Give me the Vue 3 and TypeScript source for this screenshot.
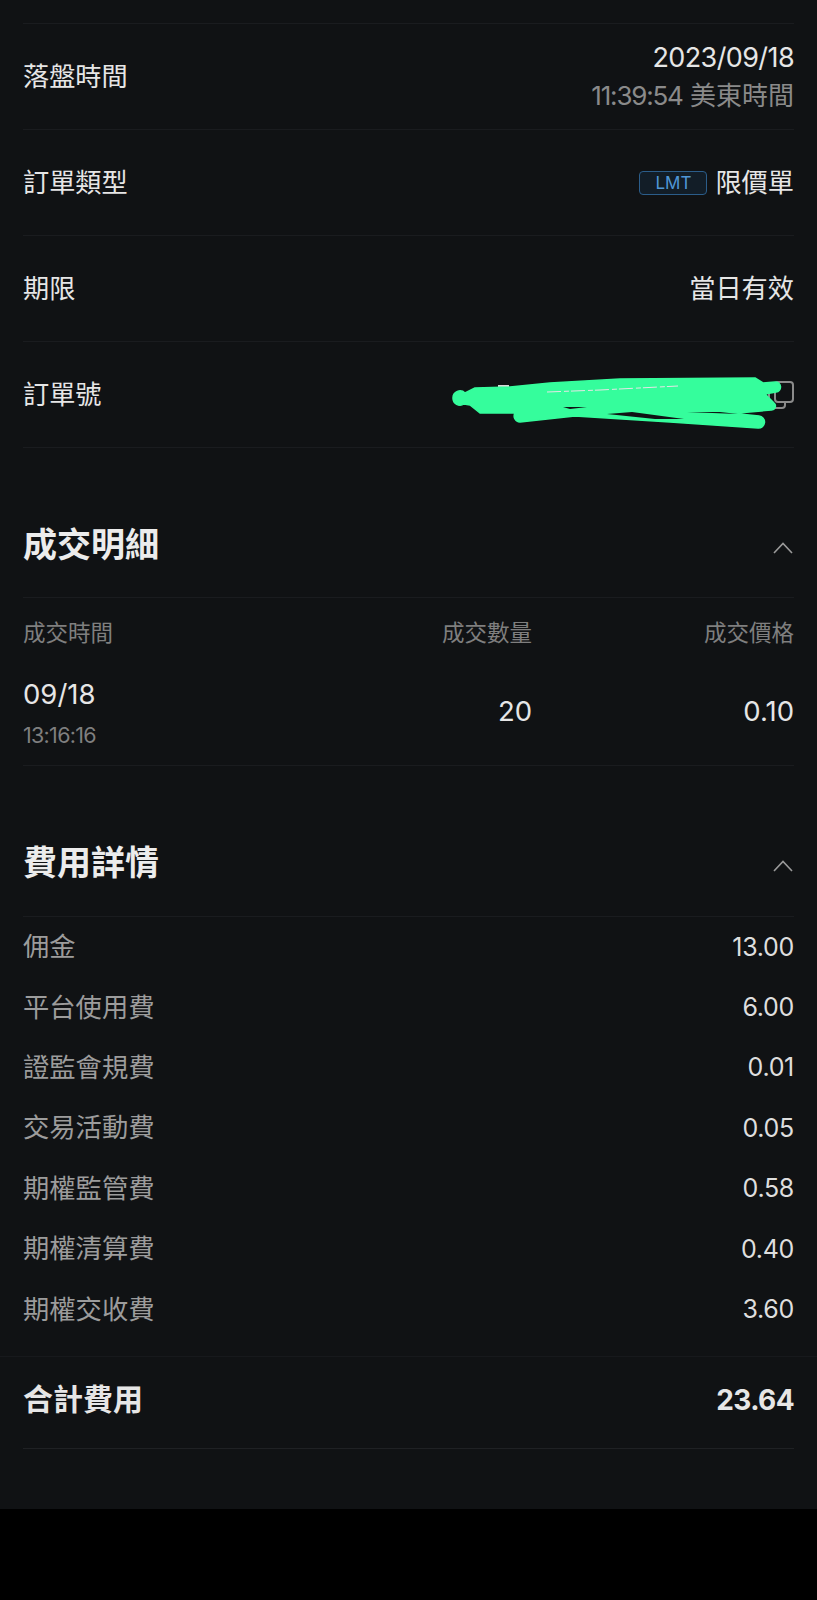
<script setup lang="ts">
interface Fill { date: string; time: string; qty: string; price: string }
interface Fee { label: string; value: string }

const fills: Fill[] = [{ date: '09/18', time: '13:16:16', qty: '20', price: '0.10' }]

const fees: Fee[] = [
  { label: '佣金', value: '13.00' },
  { label: '平台使用費', value: '6.00' },
  { label: '證監會規費', value: '0.01' },
  { label: '交易活動費', value: '0.05' },
  { label: '期權監管費', value: '0.58' },
  { label: '期權清算費', value: '0.40' },
  { label: '期權交收費', value: '3.60' }
]
</script>

<template>
  <div class="page">
    <main class="panel">
      <section class="info">
        <div class="row">
          <span class="label">落盤時間</span>
          <div class="stack">
            <span class="date">2023/09/18</span>
            <span class="muted"><span class="clock">11:39:54</span> 美東時間</span>
          </div>
        </div>
        <div class="row">
          <span class="label">訂單類型</span>
          <div class="type">
            <span class="badge">LMT</span>
            <span class="label">限價單</span>
          </div>
        </div>
        <div class="row">
          <span class="label">期限</span>
          <span class="label">當日有效</span>
        </div>
        <div class="row order">
          <span class="label">訂單號</span>
          <svg class="copy" width="26" height="28" viewBox="0 0 26 28" fill="none" stroke="#8b8b8b" stroke-width="2">
            <rect x="7" y="1" width="18" height="20" rx="3" />
            <path d="M1 9v15a3 3 0 0 0 3 3h10a3 3 0 0 0 3-3v-3" />
          </svg>
          <svg class="scribble" width="397" height="120" viewBox="0 0 397 120">
            <path d="M78 45h11" stroke="#d8d8d8" stroke-width="2" />
            <path d="M33 57a7 7 0 0 1 12-5L55 47 90 46 130 42 200 38 335 37 343 42 355 41a5 5 0 0 1 1 10L345 53 354 62a4 4 0 0 1-3 7L318 72 300 71 339 75a6 6 0 0 1-1 12L250 81 155 75 100 81a6 6 0 0 1-5-9L60 72 50 64 44 63a7 7 0 0 1-11-6Z" fill="#35fd9c" stroke="#35fd9c" stroke-width="1.5" stroke-linejoin="round" />
            <path d="M127 51 180 49 258 45" stroke="#e6e6e6" stroke-width="1" stroke-dasharray="14 3 5 2" fill="none" />
            <path d="M187 73 212 71 264 78 235 78ZM267 71 300 71 318 73ZM143 66 167 66 150 68Z" fill="#101214" />
          </svg>
        </div>
      </section>

      <section class="fills">
        <header class="title">
          <h2>成交明細</h2>
          <svg class="chevron" width="20" height="12" viewBox="0 0 20 12" fill="none" stroke="#9a9a9a" stroke-width="1.6">
            <path d="M1 11 10 1.5 19 11" />
          </svg>
        </header>
        <div class="grid head">
          <span>成交時間</span>
          <span class="end">成交數量</span>
          <span class="end">成交價格</span>
        </div>
        <div v-for="f in fills" :key="f.time" class="grid fill-row">
          <div class="when">
            <span>{{ f.date }}</span>
            <small>{{ f.time }}</small>
          </div>
          <span class="end num">{{ f.qty }}</span>
          <span class="end num">{{ f.price }}</span>
        </div>
      </section>

      <section class="costs">
        <header class="title">
          <h2>費用詳情</h2>
          <svg class="chevron" width="20" height="12" viewBox="0 0 20 12" fill="none" stroke="#9a9a9a" stroke-width="1.6">
            <path d="M1 11 10 1.5 19 11" />
          </svg>
        </header>
        <ul class="fees">
          <li v-for="fee in fees" :key="fee.label">
            <span class="fee-label">{{ fee.label }}</span>
            <span class="fee-value">{{ fee.value }}</span>
          </li>
        </ul>
        <div class="total-wrap">
          <div class="total">
            <span class="total-label">合計費用</span>
            <span class="sum">23.64</span>
          </div>
        </div>
      </section>
    </main>
  </div>
</template>

<style>
html, body {
  margin: 0;
  background: #000;
}
</style>

<style scoped>
.page {
  min-height: 1600px;
  background: #000;
  font-family: Inter, "Noto Sans CJK TC", sans-serif;
  color: #e6e6e6;
  font-size: 26px;
}

.panel {
  height: 1509px;
  box-sizing: border-box;
  padding-top: 23px;
  background: #101214;
  overflow: hidden;
}

.info {
  margin: 0 23px;
  border-top: 1px solid #1a1c1f;
}

.row {
  height: 105px;
  border-bottom: 1px solid #1a1c1f;
  display: flex;
  align-items: center;
  justify-content: space-between;
}

.label {
  margin-bottom: 4px;
  font-size: 26.2px;
}

.stack {
  display: flex;
  flex-direction: column;
  align-items: flex-end;
  gap: 4px;
  line-height: 34px;
}

.date {
  font-size: 27px;
  letter-spacing: -0.6px;
}

.muted {
  color: #8a8a8a;
}

.clock {
  letter-spacing: -1.2px;
}

.type {
  display: flex;
  align-items: center;
  gap: 8px;
}

.badge {
  width: 68px;
  height: 24px;
  box-sizing: border-box;
  border: 1px solid #2b5d8a;
  border-radius: 4px;
  background: #121d27;
  color: #4f97d6;
  font-size: 17px;
  line-height: 22px;
  text-align: center;
}

.order {
  position: relative;
}

.copy {
  display: block;
}

.scribble {
  position: absolute;
  left: 397px;
  top: -1px;
}

.fills {
  margin-top: 50px;
}

.title {
  height: 99px;
  margin: 0 23px;
  border-bottom: 1px solid #1a1c1f;
  display: flex;
  align-items: center;
  justify-content: space-between;
}

.costs .title {
  height: 101px;
}

.title h2 {
  margin: 0 0 10px;
  font-size: 34px;
  font-weight: 700;
  color: #ececec;
}

.chevron {
  margin-right: 1px;
}

.grid {
  margin: 0 23px;
  display: grid;
  grid-template-columns: 1fr 170px 262px;
  align-items: center;
}

.end {
  text-align: right;
}

.head {
  height: 70px;
  box-sizing: border-box;
  padding-bottom: 5px;
  font-size: 22.5px;
  color: #7f7f7f;
}

.fill-row {
  height: 98px;
  box-sizing: border-box;
  padding-bottom: 8px;
  border-bottom: 1px solid #1a1c1f;
  font-size: 27.5px;
}

.num {
  margin-bottom: 4px;
}

.when {
  display: flex;
  flex-direction: column;
  gap: 10px;
  line-height: 34px;
}

.when small {
  font-size: 21.5px;
  letter-spacing: -0.7px;
  line-height: 28px;
  color: #7f7f7f;
}

.costs {
  margin-top: 49px;
}

.fees {
  list-style: none;
  margin: 0;
  padding: 0 23px;
}

.fees li {
  height: 60.4px;
  box-sizing: border-box;
  padding-bottom: 3px;
  display: flex;
  align-items: center;
  justify-content: space-between;
}

.fee-label {
  margin-bottom: 2px;
  font-size: 26.3px;
  color: #9c9c9c;
}

.fee-value {
  margin-top: 2px;
  font-size: 25px;
  letter-spacing: -0.3px;
  color: #dedede;
}

.total-wrap {
  margin-top: 16.2px;
  border-top: 1px solid #17191c;
}

.total {
  height: 91px;
  margin: 0 23px;
  border-bottom: 1px solid #1f2124;
  display: flex;
  align-items: center;
  justify-content: space-between;
  font-size: 30px;
  font-weight: 700;
}

.total-label {
  margin-bottom: 10px;
}

.sum {
  margin-bottom: 4px;
  font-size: 28px;
  letter-spacing: -0.6px;
}
</style>
